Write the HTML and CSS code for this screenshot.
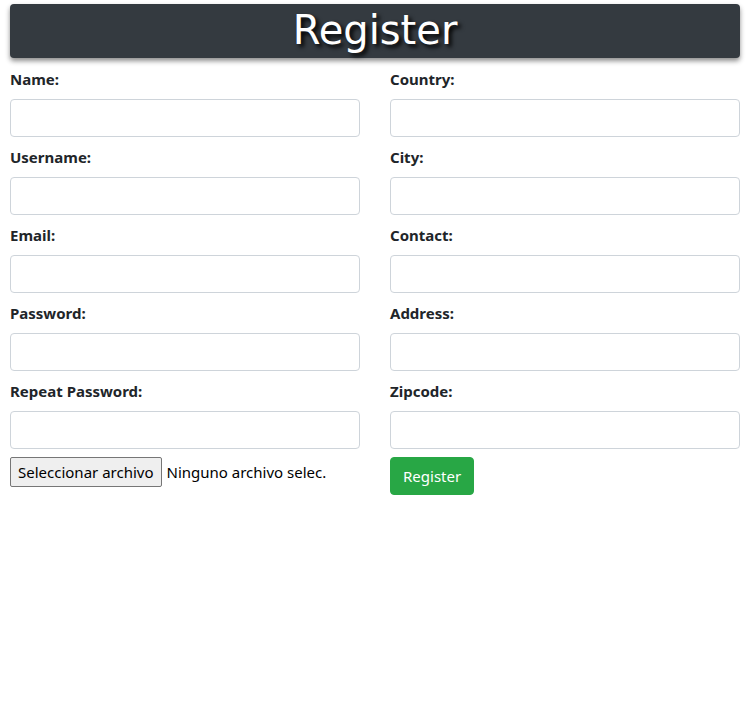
FILE: index.html
```html
<!DOCTYPE html>
<html>
<head>
<meta charset="utf-8">
<link rel="stylesheet" href="styles.css">
</head>
<body>
<div class="page">
  <h1 class="banner">Register</h1>
  <form class="grid">
    <div class="col">
      <div class="group"><label class="lbl">Name:</label><input class="field" type="text"></div>
      <div class="group"><label class="lbl">Username:</label><input class="field" type="text"></div>
      <div class="group"><label class="lbl">Email:</label><input class="field" type="text"></div>
      <div class="group"><label class="lbl">Password:</label><input class="field" type="password"></div>
      <div class="group"><label class="lbl">Repeat Password:</label><input class="field" type="password"></div>
      <div class="file">
        <span class="file-btn">Seleccionar archivo</span>
        <span class="file-name">Ninguno archivo selec.</span>
      </div>
    </div>
    <div class="col">
      <div class="group"><label class="lbl">Country:</label><input class="field" type="text"></div>
      <div class="group"><label class="lbl">City:</label><input class="field" type="text"></div>
      <div class="group"><label class="lbl">Contact:</label><input class="field" type="text"></div>
      <div class="group"><label class="lbl">Address:</label><input class="field" type="text"></div>
      <div class="group"><label class="lbl">Zipcode:</label><input class="field" type="text"></div>
      <div class="submit-row"><button class="submit" type="button">Register</button></div>
    </div>
  </form>
</div>
</body>
</html>
```
FILE: styles.css
```css
* { box-sizing: border-box; }
body {
  margin: 0;
  font-family: "Noto Sans", "Open Sans", sans-serif;
  color: #212529;
  background: #fff;
}
.page {
  padding: 4px 14px 0 10px;
}
.banner {
  margin: 0;
  height: 54px;
  background: #343a40;
  border-radius: 4px;
  box-shadow: 0 3px 5px rgba(0,0,0,0.45);
  color: #fff;
  text-align: center;
  font-family: "DejaVu Sans", sans-serif;
  font-weight: normal;
  font-size: 40px;
  line-height: 52px;
  text-shadow: 3px 3px 4px #000;
}
.grid {
  display: grid;
  grid-template-columns: 350px 350px;
  column-gap: 30px;
  margin-top: 9px;
}
.group {
  display: flex;
  flex-direction: column;
  margin-bottom: 8px;
}
.lbl {
  font-weight: bold;
  font-size: 15px;
  line-height: 24px;
  margin-bottom: 8px;
}
.field {
  height: 38px;
  border: 1px solid #ced4da;
  border-radius: 4px;
  background: #fff;
}
.file {
  display: flex;
  align-items: center;
  font-size: 15px;
  margin-top: 1px;
}
.file-btn {
  display: inline-block;
  height: 30px;
  line-height: 28px;
  padding: 0 7px;
  border: 1px solid #767676;
  border-radius: 2px;
  background: #efefef;
  color: #000;
}
.file-name {
  margin-left: 5px;
  color: #000;
}
.submit {
  height: 38px;
  padding: 0 12px;
  border: 1px solid #28a745;
  border-radius: 4px;
  background: #28a745;
  color: #fff;
  font-family: "Noto Sans", "Open Sans", sans-serif;
  font-size: 15px;
}
```
